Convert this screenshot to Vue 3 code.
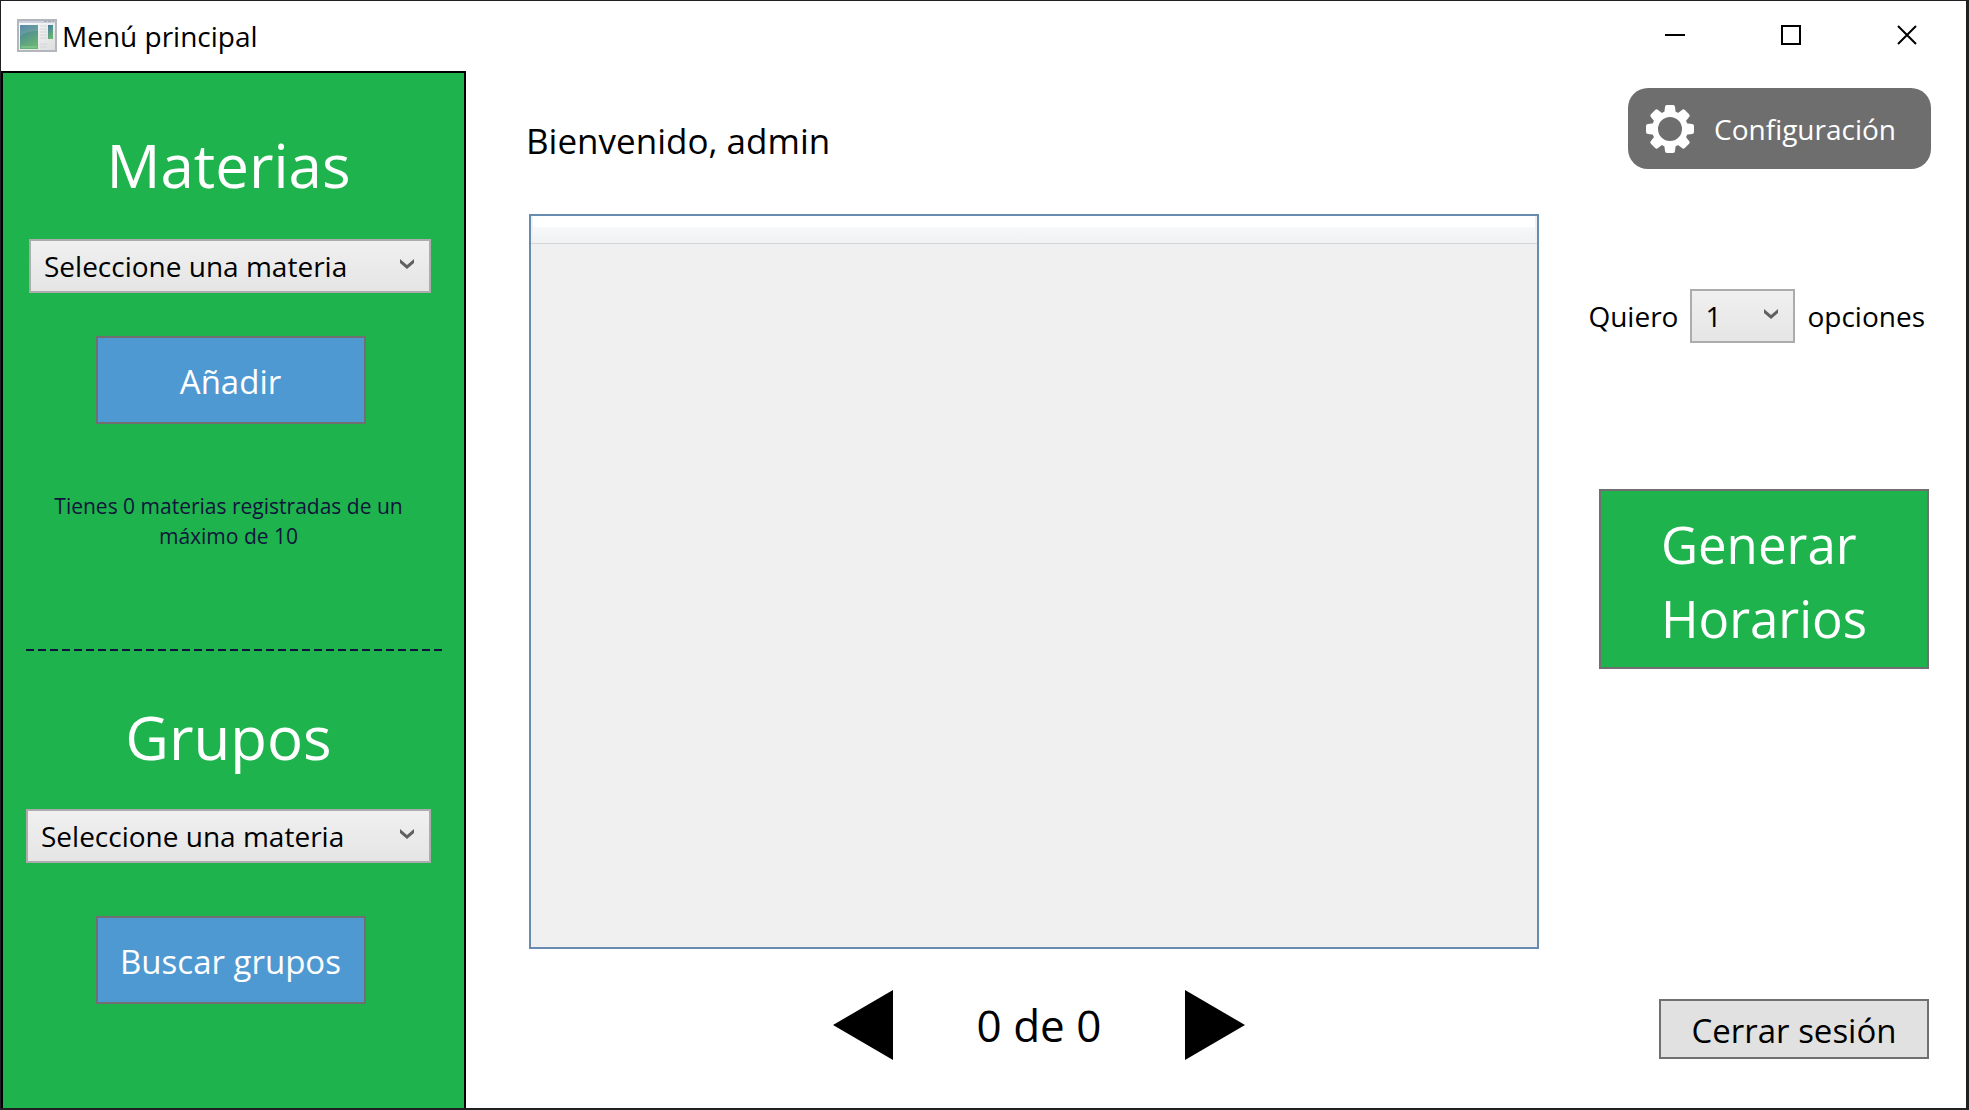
<script setup>
import { ref } from 'vue'

const placeholder = 'Seleccione una materia'
const materia = ref(placeholder)
const grupo = ref(placeholder)
const opciones = ref(1)
const actual = ref(0)
const total = ref(0)
const registradas = ref(0)
</script>

<template>
  <div class="window">
    <header class="titlebar">
      <svg class="app-icon" width="40" height="33" viewBox="0 0 40 33" aria-hidden="true">
        <defs>
          <linearGradient id="pane" x1="0" y1="0" x2="0.4" y2="1">
            <stop offset="0" stop-color="#4478a4" />
            <stop offset="1" stop-color="#68b473" />
          </linearGradient>
          <linearGradient id="sheet" x1="0" y1="0" x2="1" y2="1">
            <stop offset="0" stop-color="#ffffff" />
            <stop offset="1" stop-color="#dcdde0" />
          </linearGradient>
        </defs>
        <rect x="1" y="1" width="38" height="31" fill="url(#sheet)" stroke="#b4b6be" stroke-width="2" />
        <path d="M2 3h36" stroke="#ccd2de" stroke-width="2" />
        <path d="M27 2.500h10" stroke="#a3a7b0" stroke-width="1" stroke-dasharray="3 1" />
        <rect x="3" y="6" width="18" height="24" fill="url(#pane)" />
        <path d="M3 17q7-5 18-5v-6h-18z" fill="#ffffff" opacity="0.12" />
        <path d="M4 28h16" stroke="#8fd09a" />
        <path d="M23 7h7M23 10h7M23 13h7M23 16h7M23 19h7M23 25h7M23 28h7" stroke="#d3d4d6" />
        <rect x="31" y="6" width="5" height="14" fill="url(#pane)" />
      </svg>
      <h1 class="title">Menú principal</h1>
      <div class="controls">
        <button type="button" aria-label="Minimizar">
          <svg width="20" height="20" viewBox="0 0 20 20"><path d="M0 10h20" stroke="#000" stroke-width="2" /></svg>
        </button>
        <button type="button" aria-label="Maximizar">
          <svg width="20" height="20" viewBox="0 0 20 20"><rect x="1" y="1" width="18" height="18" fill="none" stroke="#000" stroke-width="2" /></svg>
        </button>
        <button type="button" aria-label="Cerrar">
          <svg width="20" height="20" viewBox="0 0 20 20"><path d="M1 1l18 18M19 1l-18 18" stroke="#000" stroke-width="2" /></svg>
        </button>
      </div>
    </header>

    <div class="body">
      <aside class="sidebar">
        <section class="block">
          <h2>Materias</h2>
          <div class="combo inset">
            <select v-model="materia" aria-label="Materia">
              <option>{{ placeholder }}</option>
            </select>
            <svg class="chevron" width="14" height="10" viewBox="0 0 14 10"><path d="M0 0l7 6 7-6v4l-7 6-7-6z" fill="#606060" /></svg>
          </div>
          <button type="button" class="blue add">Añadir</button>
          <p class="note">Tienes {{ registradas }} materias registradas de un máximo de 10</p>
        </section>
        <div class="divider"></div>
        <section class="block groups">
          <h2>Grupos</h2>
          <div class="combo">
            <select v-model="grupo" aria-label="Materia del grupo">
              <option>{{ placeholder }}</option>
            </select>
            <svg class="chevron" width="14" height="10" viewBox="0 0 14 10"><path d="M0 0l7 6 7-6v4l-7 6-7-6z" fill="#606060" /></svg>
          </div>
          <button type="button" class="blue search">Buscar grupos</button>
        </section>
      </aside>

      <main class="center">
        <p class="welcome">Bienvenido, admin</p>
        <div class="grid">
          <table aria-label="Horario">
            <thead><tr><th></th></tr></thead>
          </table>
        </div>
        <nav class="pager">
          <button type="button" aria-label="Anterior">
            <svg width="60" height="70" viewBox="0 0 60 70"><path d="M0 35L60 0v70z" /></svg>
          </button>
          <span>{{ actual }} de {{ total }}</span>
          <button type="button" aria-label="Siguiente">
            <svg width="60" height="70" viewBox="0 0 60 70"><path d="M60 35L0 0v70z" /></svg>
          </button>
        </nav>
      </main>

      <div class="actions">
        <button type="button" class="config">
          <svg width="48" height="48" viewBox="-24 -24 48 48" aria-hidden="true">
            <g fill="#fff">
              <path v-for="n in 8" :key="n" :transform="`rotate(${n * 45})`" d="M-6 -14L-5 -22q0-2 2-2h6q2 0 2 2L6 -14z" />
            </g>
            <circle r="15" fill="none" stroke="#fff" stroke-width="6" />
          </svg>
          <span>Configuración</span>
        </button>
        <div class="amount">
          <label for="opciones">Quiero</label>
          <div class="combo small">
            <select id="opciones" v-model="opciones">
              <option>1</option>
            </select>
            <svg class="chevron" width="14" height="10" viewBox="0 0 14 10"><path d="M0 0l7 6 7-6v4l-7 6-7-6z" fill="#606060" /></svg>
          </div>
          <span>opciones</span>
        </div>
        <button type="button" class="generate"><span>Generar<br />Horarios</span></button>
        <button type="button" class="logout">Cerrar sesión</button>
      </div>
    </div>
  </div>
</template>

<style>
body {
  margin: 0;
}
</style>

<style scoped>
* {
  box-sizing: border-box;
}
.window {
  min-height: 100vh;
  display: flex;
  flex-direction: column;
  background: #fff;
  border: 1px solid #1f1f24;
  border-right-width: 3px;
  border-bottom-width: 2px;
  font-family: "Open Sans", "Noto Sans", sans-serif;
  font-size: 28px;
  color: #000;
}
button,
select {
  font: inherit;
  color: inherit;
  margin: 0;
  padding: 0;
}
svg {
  display: block;
}
h1,
h2,
p {
  margin: 0;
  font-weight: 400;
}
.titlebar {
  height: 70px;
  display: flex;
  align-items: center;
  padding-left: 16px;
}
.app-icon {
  margin-bottom: 2px;
}
.title {
  margin-left: 5px;
  font-size: 28px;
  line-height: 40px;
}
.controls {
  align-self: flex-start;
  margin-left: auto;
  margin-right: 1px;
  display: flex;
}
.controls button {
  width: 116px;
  height: 68px;
  display: flex;
  align-items: center;
  justify-content: center;
  border: 0;
  background: none;
}
.body {
  flex: 1;
  display: flex;
}
.sidebar {
  flex: 0 0 465px;
  background: #1eb34c;
  border: 2px solid #000;
  border-bottom: 0;
  padding: 52px 33px 0 23px;
}
.block {
  display: flex;
  flex-direction: column;
  align-items: center;
}
h2 {
  font-size: 60px;
  line-height: 80px;
  color: #fff;
}
.combo {
  position: relative;
  align-self: stretch;
  margin-top: 32px;
}
.combo.inset {
  margin: 34px 0 0 3px;
}
.combo select {
  display: block;
  width: 100%;
  height: 54px;
  padding: 0 0 0 13px;
  appearance: none;
  border: 2px solid #acacac;
  border-radius: 0;
  background: linear-gradient(#f0f0f0, #e5e5e5);
}
.chevron {
  position: absolute;
  right: 17px;
  top: 20px;
  pointer-events: none;
}
.blue {
  width: 270px;
  height: 88px;
  margin-left: 4px;
  padding-top: 2px;
  border: 2px solid #707070;
  background: #4e99d2;
  color: #fff;
  font-size: 33px;
}
.add {
  margin-top: 43px;
}
.search {
  margin-top: 53px;
}
.note {
  margin-top: 67px;
  font-size: 21px;
  line-height: 30px;
  text-align: center;
  color: #10143c;
}
.divider {
  height: 2px;
  margin: 98px -11px 0 0;
  background: repeating-linear-gradient(90deg, #10143c 0 8px, transparent 8px 12px);
}
.groups {
  margin-top: 46px;
}
.center {
  flex: 1;
  min-width: 0;
  display: flex;
  flex-direction: column;
  padding: 44px 0 48px 60px;
}
.welcome {
  font-size: 35px;
  line-height: 52px;
}
.grid {
  flex: 1;
  margin: 47px 0 0 3px;
  border: 2px solid #688caf;
  background: #f0f0f0;
}
.grid table {
  width: 100%;
  border-collapse: collapse;
}
.grid th {
  height: 27px;
  padding: 0;
  border: solid #d5d5d5;
  border-width: 0 0 1px;
  background: linear-gradient(#fff 40%, #f7f8fa 40%, #f0f1f3);
  box-shadow: inset 2px 0 #eef0f2, inset -2px 0 #eef0f2;
}
.pager {
  margin-top: 41px;
  padding-left: 13px;
  display: flex;
  align-items: center;
  justify-content: center;
  gap: 84px;
  font-size: 44px;
  line-height: 70px;
}
.pager button {
  border: 0;
  background: none;
}
.actions {
  flex: 0 0 427px;
  display: flex;
  flex-direction: column;
  align-items: flex-end;
  padding: 17px 35px 49px 0;
}
.config {
  width: 303px;
  height: 81px;
  display: flex;
  align-items: center;
  gap: 20px;
  padding-left: 18px;
  border: 0;
  border-radius: 20px;
  background: #6e6e6e;
  color: #fff;
}
.amount {
  margin: 120px 6px 0 0;
  display: flex;
  align-items: center;
  gap: 12px;
}
.combo.small {
  width: 105px;
  margin: 0;
}
.generate {
  width: 330px;
  height: 180px;
  margin: 146px 2px 0 0;
  padding-top: 3px;
  border: 2px solid #707070;
  background: #1eb34c;
  color: #fff;
  font-size: 51px;
  line-height: 74px;
}
.generate span {
  display: inline-block;
  text-align: left;
}
.logout {
  width: 270px;
  height: 60px;
  margin: auto 2px 0 0;
  padding-top: 2px;
  border: 2px solid #707070;
  background: #e1e1e1;
  font-size: 33px;
}
</style>
